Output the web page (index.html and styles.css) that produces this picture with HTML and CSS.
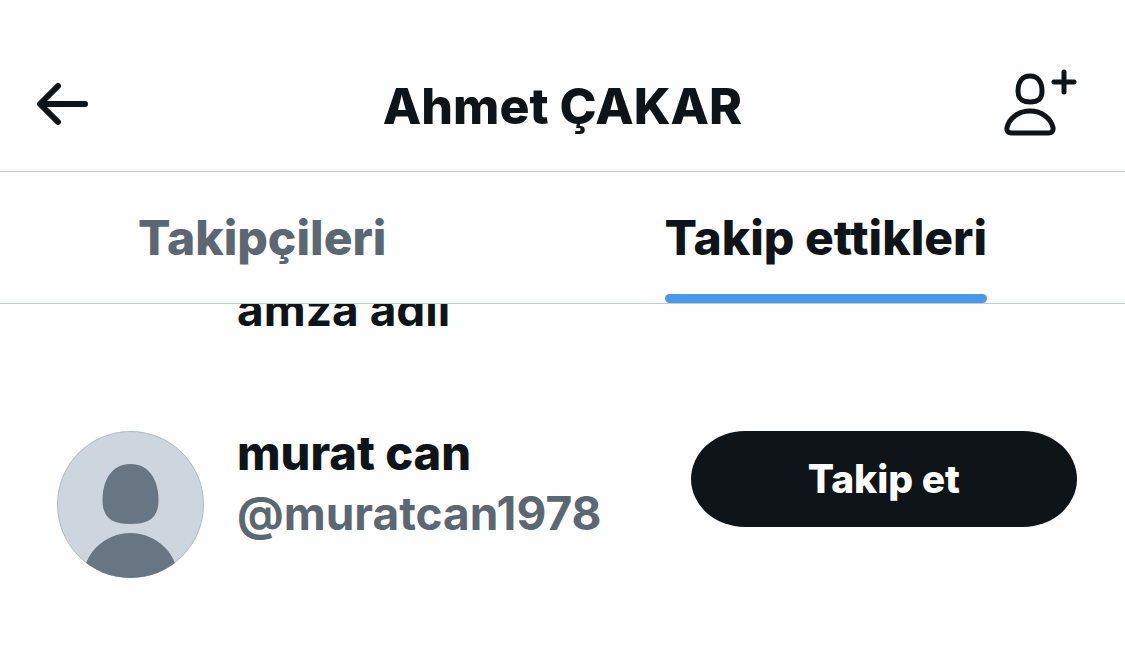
FILE: index.html
```html
<!DOCTYPE html>
<html lang="tr">
<head>
    <meta charset="UTF-8">
    <meta name="viewport" content="width=device-width, initial-scale=1.0">
    <title>Ahmet ÇAKAR</title>
    <link rel="stylesheet" href="styles.css">
</head>
<body>
    <header class="top-bar">
        <button class="icon-btn" type="button" aria-label="Geri">
            <svg width="54" height="48" viewBox="0 0 54 48">
                <path d="M49 24H5M22 6L4 24L22 42"/>
            </svg>
        </button>
        <h1 class="title">Ahmet ÇAKAR</h1>
        <button class="icon-btn" type="button" aria-label="Kişi ekle">
            <svg class="add-icon" width="76" height="72" viewBox="0 0 76 72">
                <path d="M28 8C36 8 40 14.500 40 23C40 31 36 34 28 34C20 34 16 31 16 23C16 14.500 20 8 28 8Z"/>
                <path d="M28 43C40 43 49 50.500 51 59.500C51.500 63 50 65 47 65H9C6 65 4.500 63 5 59.500C7 50.500 16 43 28 43Z"/>
                <path d="M62 4V24M52 14H72"/>
            </svg>
        </button>
    </header>

    <nav class="tabs">
        <a class="tab" href="#takipciler">Takipçileri</a>
        <a class="tab active" href="#takip" aria-current="page">Takip ettikleri</a>
    </nav>

    <main class="list">
        <div class="user scrolled">
            <p class="bio">amza adil</p>
        </div>
        <div class="user">
            <svg class="avatar" width="147" height="147" viewBox="0 0 147 147">
                <defs>
                    <clipPath id="circle"><circle cx="73.500" cy="73.500" r="73.500"/></clipPath>
                </defs>
                <g clip-path="url(#circle)">
                    <rect width="147" height="147" fill="#cdd5de"/>
                    <path fill="#687684" d="M73.500 33C92 33 101.500 49 101.500 69C101.500 87 92 93 73.500 93C55 93 45.500 87 45.500 69C45.500 49 55 33 73.500 33Z"/>
                    <circle cx="73.500" cy="150" r="48" fill="#687684"/>
                </g>
                <circle cx="73.500" cy="73.500" r="73" fill="none" stroke="#68768440"/>
            </svg>
            <div class="user-info">
                <p class="name">murat can</p>
                <p class="handle">@muratcan1978</p>
            </div>
            <button class="follow-btn" type="button">Takip et</button>
        </div>
    </main>
</body>
</html>
```
FILE: styles.css
```css
* {
    box-sizing: border-box;
}
body {
    margin: 0;
    height: 100vh;
    display: flex;
    flex-direction: column;
    font-family: Inter, "Liberation Sans", sans-serif;
    font-size: 46px;
    font-weight: 700;
    line-height: 60px;
    color: #0f1419;
    background: #fefefe;
    overflow: hidden;
}
h1, p {
    margin: 0;
}
button {
    border: none;
    padding: 0;
    font-family: inherit;
    cursor: pointer;
}

/* Top bar */
.top-bar {
    display: grid;
    grid-template-columns: 1fr auto 1fr;
    align-items: center;
    padding: 68px 36px 31px;
    border-bottom: 1px solid #c6cdd2;
}
.icon-btn {
    display: flex;
    justify-self: start;
    background: none;
}
.icon-btn:last-child {
    justify-self: end;
}
.icon-btn svg {
    fill: none;
    stroke: #0f1419;
    stroke-width: 6;
    stroke-linecap: round;
    stroke-linejoin: round;
}
.icon-btn .add-icon {
    margin-right: 11px;
    stroke-width: 5;
}
.title {
    padding-top: 4px;
    font-size: 50px;
    font-weight: 800;
}

/* Tabs */
.tabs {
    display: flex;
    justify-content: space-between;
    padding: 0 138px;
    border-bottom: 1px solid #c6cdd2;
    font-size: 48px;
    font-weight: 800;
}
.tab {
    padding: 36px 0 35px;
    color: #5b6772;
    text-decoration: none;
}
.tab.active {
    position: relative;
    color: #0f1419;
}
.tab.active::after {
    content: "";
    position: absolute;
    left: 0;
    right: 0;
    bottom: 0;
    height: 9px;
    border-radius: 5px;
    background: #4a99e9;
}

/* User list */
.list {
    flex: 1;
    overflow: hidden;
}
.user {
    display: flex;
    align-items: flex-start;
    padding: 0 48px 84px 57px;
}
.user.scrolled {
    margin-top: -25px;
    padding-left: 237px;
}
.avatar {
    flex: none;
    margin: 8px 33px 0 0;
}
.user-info {
    flex: 1;
    min-width: 0;
}
.name {
    font-size: 47px;
    font-weight: 800;
}
.handle {
    color: #5b6772;
}
.follow-btn {
    margin-top: 8px;
    padding: 18px 117px;
    border-radius: 54px / 48px;
    background: #0f1419;
    color: #fff;
    font-size: 39px;
    font-weight: 800;
    line-height: 60px;
}
```
